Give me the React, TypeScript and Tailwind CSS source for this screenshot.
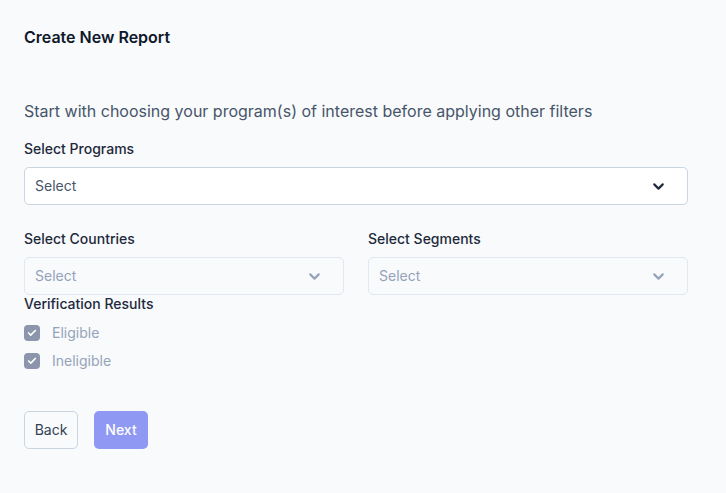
import { Check, ChevronDown } from 'lucide-react';

interface SelectBoxProps {
    disabled?: boolean;
}

function SelectBox({ disabled }: SelectBoxProps) {
    return (
        <div
            className={`h-[38px] w-full flex items-center justify-between pl-[10px] pr-[20px] rounded-[5px] border text-sm ${
                disabled
                    ? 'bg-[#f8fafc] border-[#e2e8f0] text-[#94a3b8]'
                    : 'bg-white border-[#cbd5e1] text-[#475569]'
            }`}
        >
            <span>Select</span>
            <ChevronDown
                className={`w-[17px] h-[17px] ${disabled ? 'text-[#94a3b8]' : 'text-[#1e293b]'}`}
                strokeWidth={3}
            />
        </div>
    );
}

function CheckRow({ label }: { label: string }) {
    return (
        <label className="flex items-center gap-3 h-[16px]">
            <span className="w-4 h-4 rounded-[4px] bg-[#8b96ad] flex items-center justify-center">
                <Check className="w-[10px] h-[10px] text-white" strokeWidth={4} />
            </span>
            <span className="text-sm text-[#94a3b8]">{label}</span>
        </label>
    );
}

export default function App() {
    return (
        <div
            className="min-h-screen w-full bg-[#f8fafc] text-[#1e293b]"
            style={{ fontFamily: 'Inter, "Noto Sans", sans-serif' }}
        >
            <div className="w-[664px] ml-6 pt-[26px]">
                <h1 className="text-base font-semibold text-[#0f172a] leading-[22px]">Create New Report</h1>

                <p className="mt-[51px] text-base text-[#475569] leading-6">
                    Start with choosing your program(s) of interest before applying other filters
                </p>

                {/* Programs */}
                <div className="mt-4">
                    <div className="text-sm font-medium text-[#1e293b] leading-5">Select Programs</div>
                    <div className="mt-2">
                        <SelectBox />
                    </div>
                </div>

                {/* Countries / Segments */}
                <div className="mt-6 grid grid-cols-2 gap-6">
                    <div>
                        <div className="text-sm font-medium text-[#1e293b] leading-5">Select Countries</div>
                        <div className="mt-2">
                            <SelectBox disabled />
                        </div>
                    </div>
                    <div>
                        <div className="text-sm font-medium text-[#1e293b] leading-5">Select Segments</div>
                        <div className="mt-2">
                            <SelectBox disabled />
                        </div>
                    </div>
                </div>

                {/* Verification */}
                <div className="-mt-[1px]">
                    <div className="text-sm font-medium text-[#1e293b] leading-5">Verification Results</div>
                    <div className="mt-[11px] flex flex-col gap-3">
                        <CheckRow label="Eligible" />
                        <CheckRow label="Ineligible" />
                    </div>
                </div>

                {/* Actions */}
                <div className="mt-[42px] flex gap-4">
                    <button className="h-[38px] w-[54px] rounded-[5px] border border-[#cbd5e1] bg-[#f8fafc] text-sm text-[#334155]">
                        Back
                    </button>
                    <button className="h-[38px] w-[54px] rounded-[5px] bg-[#8f98f3] text-sm font-medium text-white">
                        Next
                    </button>
                </div>
            </div>
        </div>
    );
}
